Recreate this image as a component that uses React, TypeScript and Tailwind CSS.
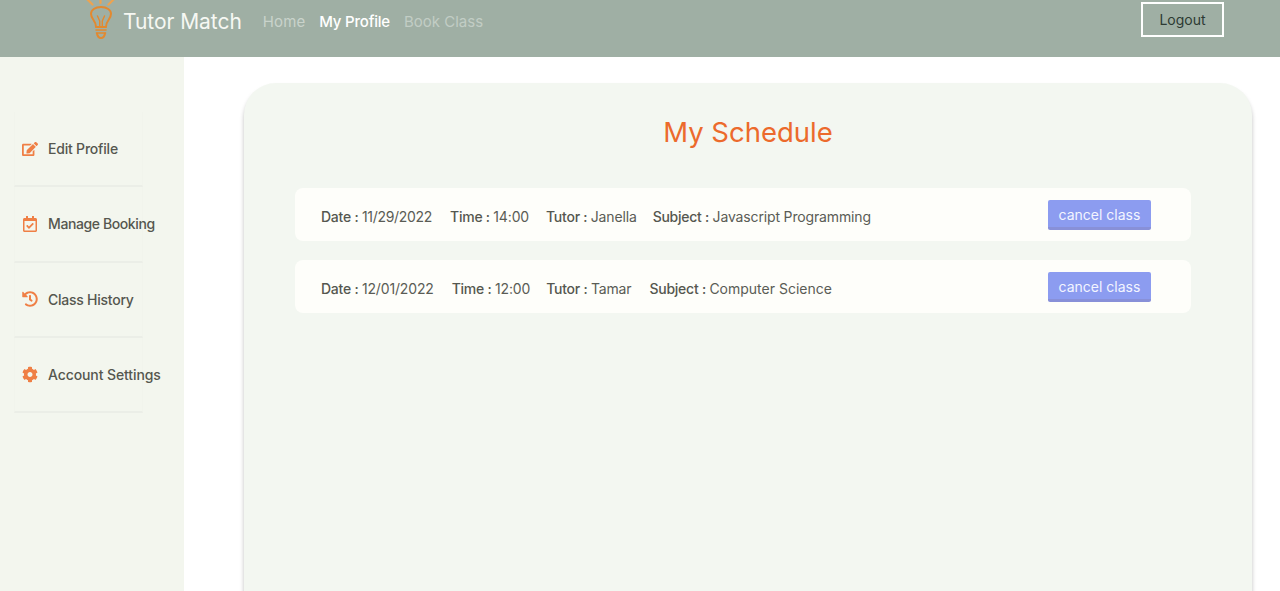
import React from "react";
import { FaEdit, FaRegCalendarCheck, FaHistory, FaCog } from "react-icons/fa";

function Bulb() {
  return (
    <svg width="34" height="40" viewBox="0 0 34 40" fill="none" stroke="#e3892f" strokeWidth="2" strokeLinecap="round" strokeLinejoin="round" className="shrink-0">
      <path d="M16.500 -1v4M3 -1l5.500 5.500M30 -1l-5.500 5.500" strokeWidth="2.200" stroke="#eda350" />
      <path d="M12 27c0-3.500-1.200-5.200-2.800-7.500-1.300-1.900-2.200-3.400-2.200-5.700C7 10 11 7 17 7s10 3 10 6.800c0 2.300-.9 3.800-2.200 5.700-1.600 2.300-2.800 4-2.800 7.500z" />
      <path d="M13.500 16l2.200 5v6M20.500 16l-2.200 5v6" strokeWidth="1.400" />
      <path d="M12 27h10M12 30h10M12.500 33h9" strokeWidth="1.600" />
      <path d="M13 33.500c.5 2.800 2 4.500 4 4.500s3.500-1.700 4-4.500" />
    </svg>
  );
}

const side = [
  { label: "Edit Profile", Icon: FaEdit, size: 18, track: "tracking-[-0.2px]" },
  { label: "Manage Booking", Icon: FaRegCalendarCheck, size: 16, track: "tracking-[-0.4px]" },
  { label: "Class History", Icon: FaHistory, size: 16, track: "tracking-[-0.25px]" },
  { label: "Account Settings", Icon: FaCog, size: 17, track: "tracking-[-0.1px]" },
];

const rows = [
  { date: "11/29/2022", time: "14:00", tutor: "Janella", subject: "Javascript Programming", top: "mt-[37px]", g1: "mr-[18px]", g2: "mr-[17px]", g3: "mr-[16px]", dt: "tracking-[-0.3px]", st: "tracking-[-0.15px]" },
  { date: "12/01/2022", time: "12:00", tutor: "Tamar", subject: "Computer Science", top: "mt-[19px]", g1: "mr-[18px]", g2: "mr-[16px]", g3: "mr-[18px]", dt: "tracking-[-0.15px]", st: "tracking-[0px]" },
];

function Field({ k, v, gap, track }: { k: string; v: string; gap?: string; track?: string }) {
  return (
    <span className={`whitespace-nowrap pt-[3px] ${gap ?? ""}`}>
      <span className="font-medium tracking-[-0.25px]">{k} : </span>
      <span className={`text-[#5a5c55] ${track ?? "tracking-[-0.15px]"}`}>{v}</span>
    </span>
  );
}

export default function App() {
  return (
    <div className="h-[591px] w-[1280px] overflow-hidden bg-white font-['Inter',sans-serif] text-[#55574f]">
      <header className="h-[57px] bg-[#9fafa4] flex items-start pl-[84px] pr-[56px] overflow-hidden">
        <Bulb />
        <span className="ml-[5px] mt-[7px] text-[21px] leading-[29px] text-[#f6f8f3] tracking-[-0.05px]">Tutor Match</span>
        <nav className="flex ml-[21px] mt-[10px] gap-[14px] text-[15px] leading-[23px]">
          <span className="text-[#c9d3cb] tracking-[0.1px]">Home</span>
          <span className="text-white font-medium tracking-[-0.2px]">My Profile</span>
          <span className="text-[#c2cdc5]">Book Class</span>
        </nav>
        <button className="ml-auto mt-[2px] w-[83px] h-[35px] border-2 border-white text-[14px] leading-[29px] text-[#2d3a33] pb-[1px]">Logout</button>
      </header>
      <div className="flex">
        <aside className="w-[184px] h-[534px] shrink-0 bg-[#f3f6ee] pt-[55px] pl-[14px]">
          {side.map(({ label, Icon, size, track }) => (
            <div key={label} className="w-[129px] h-[75.300px] border-b-2 border-x border-x-[#f1f4ec] border-b-[#ebeee7] flex items-center whitespace-nowrap">
              <span className="w-[33px] pl-[7px] flex justify-center pr-[10px] text-[#ef7f45]"><Icon size={size} /></span>
              <span className={`text-[14px] font-medium ${track}`}>{label}</span>
            </div>
          ))}
        </aside>
        <main className="flex-1 pl-[60px] pr-[28px] pt-[26px]">
          <section className="h-[600px] bg-[#f3f7f1] rounded-[32px] shadow-[0_4px_4px_0_rgba(0,0,0,0.25)] pl-[51px] pr-[61px] pt-[31px]">
            <h1 className="text-center text-[27.500px] leading-[37px] text-[#ec6a2c] pl-[10px]">My Schedule</h1>
            {rows.map((r) => (
              <div key={r.date} className={`${r.top} h-[53px] rounded-lg bg-[#fefefa] flex items-center pl-[26px] pr-[40px] text-[14px]`}>
                <Field k="Date" v={r.date} gap={r.g1} track={r.dt} />
                <Field k="Time" v={r.time} gap={r.g2} />
                <Field k="Tutor" v={r.tutor} gap={r.g3} />
                <Field k="Subject" v={r.subject} track={r.st} />
                <button className="ml-auto w-[103px] h-[30px] rounded-[2px] bg-[#8c9cf0] border-b-[3px] border-[#8890d8] pt-[2px] text-[14px] text-[#f3f5ff]">cancel class</button>
              </div>
            ))}
          </section>
        </main>
      </div>
    </div>
  );
}
